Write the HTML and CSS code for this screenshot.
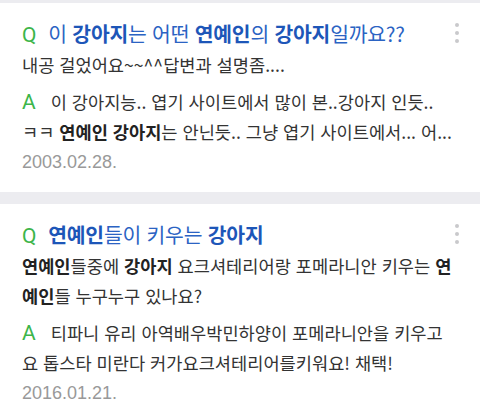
FILE: index.html
```html
<!DOCTYPE html>
<html lang="ko">
<head>
<meta charset="utf-8">
<title>지식iN 검색 결과</title>
<link rel="stylesheet" href="styles.css">
</head>
<body>
<ul class="results">
  <li class="card">
    <button class="more" type="button" aria-label="더보기"><span></span><span></span><span></span></button>
    <h2 class="title"><span class="mark q">Q</span>이 <b>강아지</b>는 어떤 <b>연예인</b>의 <b>강아지</b>일까요??</h2>
    <p class="question">내공 걸었어요~~^^답변과 설명좀....</p>
    <p class="answer"><span class="mark a">A</span>이 강아지능.. 엽기 사이트에서 많이 본..강아지 인듯.. <span class="nowrap">ㅋㅋ</span> <b>연예인 강아지</b>는 안닌듯.. 그냥 엽기 사이트에서... 어...</p>
    <time class="date">2003.02.28.</time>
  </li>
  <li class="card">
    <button class="more" type="button" aria-label="더보기"><span></span><span></span><span></span></button>
    <h2 class="title"><span class="mark q">Q</span><b>연예인</b>들이 키우는 <b>강아지</b></h2>
    <p class="question"><b>연예인</b>들중에 <b>강아지</b> 요크셔테리어랑 포메라니안 키우는 <b>연예인</b>들 누구누구 있나요?</p>
    <p class="answer"><span class="mark a">A</span>티파니 유리 아역배우박민하양이 포메라니안을 키우고요 톱스타 미란다 커가요크셔테리어를키워요! 채택!</p>
    <time class="date">2016.01.21.</time>
  </li>
</ul>
</body>
</html>
```

FILE: styles.css
```css
* {
  box-sizing: border-box;
}

body {
  margin: 0;
  background: #ececf0;
  font-family: "Noto Sans CJK KR", "Noto Sans", sans-serif;
  color: #333;
}

.results {
  list-style: none;
  margin: 0;
  padding: 3px 0 0;
  display: flex;
  flex-direction: column;
  gap: 12px;
}

.card {
  position: relative;
  background: #fff;
  padding: 15px 22px 15px 22px;
}

.more {
  position: absolute;
  top: 20px;
  right: 21px;
  display: flex;
  flex-direction: column;
  gap: 4px;
  padding: 0;
  border: 0;
  background: none;
}

.more span {
  width: 4px;
  height: 4px;
  border-radius: 50%;
  background: #c9c9cc;
}

.title {
  margin: 0;
  font-size: 20.4px;
  line-height: 30px;
  font-weight: 400;
  color: #2b63c3;
  letter-spacing: -0.2px;
}

.title b {
  font-weight: 700;
  color: #1d56b8;
}

.mark {
  font-family: Roboto, "Liberation Sans", sans-serif;
  font-weight: 400;
  font-size: 21px;
  color: #3cb54a;
}

.q {
  margin-right: 12px;
}

.a {
  margin-right: 15px;
}

.question,
.answer {
  margin: 0;
  font-size: 17.6px;
  line-height: 30px;
  word-break: break-all;
}

.answer {
  margin-top: 7px;
}

.nowrap {
  white-space: nowrap;
}

.question b,
.answer b {
  font-weight: 700;
  color: #222;
}

.date {
  display: block;
  font-family: "Liberation Sans", Arial, sans-serif;
  font-size: 18px;
  line-height: 30px;
  color: #999;
}
```
